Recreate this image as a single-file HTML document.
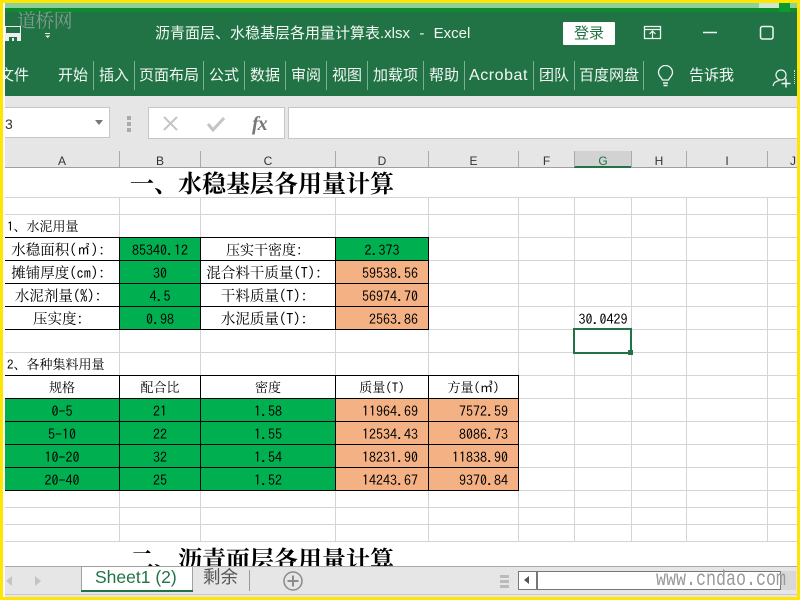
<!DOCTYPE html>
<html><head><meta charset="utf-8">
<style>
html,body{margin:0;padding:0;background:#fff}
#p{position:relative;width:800px;height:600px;overflow:hidden;background:#fff;font-family:"Liberation Sans","Noto Sans CJK SC",sans-serif}
#p div{position:absolute;white-space:nowrap}
.r{color:#f2f7f4;font-size:15px;line-height:20px;top:66px;font-family:"Liberation Sans","Noto Sans CJK SC",sans-serif}
.s{top:61px;width:1px;height:29px;background:#7fae95}
.h{top:156px;line-height:11px;font-size:12px;color:#333;text-align:center;font-family:"Liberation Sans",sans-serif}
.c{font-family:"Noto Serif CJK SC","Liberation Serif",serif;font-size:14px;line-height:22px;color:#000;text-align:center}
.n{font-family:"IPAGothic","Liberation Mono",monospace;font-size:14px;line-height:22px;color:#000;text-align:center}
.m{font-family:"IPAGothic","Liberation Mono",monospace}
.ra{text-align:right}
.t{font-family:"Noto Serif CJK SC","Liberation Serif",serif;font-weight:700;font-size:24px;line-height:30px;color:#000}
</style></head><body>
<div id="p">
<!-- grid -->
<svg style="position:absolute;left:0;top:0" width="800" height="600" shape-rendering="crispEdges">
<g stroke="#d4d4d4" stroke-width="1">
<path d="M119.5 167V566M200.5 167V566M335.5 167V566M428.5 167V566M518.5 167V566M574.5 167V566M631.5 167V566M686.5 167V566M767.5 167V566"/>
<path d="M5 197.5H797M5 214.5H797M5 237.5H797M5 260.5H797M5 283.5H797M5 306.5H797M5 329.5H797M5 352.5H797M5 375.5H797M5 398.5H797M5 421.5H797M5 444.5H797M5 467.5H797M5 490.5H797M5 507.5H797M5 524.5H797M5 541.5H797"/>
</g>
<rect x="120" y="238" width="80" height="91" fill="#00B050"/>
<rect x="336" y="238" width="92" height="22" fill="#00B050"/>
<rect x="336" y="261" width="92" height="68" fill="#F4B183"/>
<rect x="5" y="399" width="330" height="91" fill="#00B050"/>
<rect x="336" y="399" width="182" height="91" fill="#F4B183"/>
<rect x="5" y="168" width="792" height="29" fill="#fff"/>
<rect x="5" y="542" width="792" height="24" fill="#fff"/>
<g stroke="#000" stroke-width="1">
<path d="M5 237.5H428.5M5 260.5H428.5M5 283.5H428.5M5 306.5H428.5M5 329.5H428.5"/>
<path d="M119.5 237V330M200.5 237V330M335.5 237V330M428.5 237V330"/>
<path d="M5 375.5H518.5M5 398.5H518.5M5 421.5H518.5M5 444.5H518.5M5 467.5H518.5M5 490.5H518.5"/>
<path d="M119.5 375V491M200.5 375V491M335.5 375V491M428.5 375V491M518.5 375V491"/>
</g>
</svg>

<!-- title bar -->
<div style="left:3px;top:3px;width:794px;height:5px;background:#8fce9d"></div>
<div style="left:3px;top:8px;width:794px;height:4px;background:#0f8a2c"></div>
<div style="left:759px;top:3px;width:20px;height:5px;background:#cfe6d2"></div>
<div style="left:779px;top:3px;width:11px;height:9px;background:#0f9a2e"></div>
<div style="left:5px;top:12px;width:792px;height:84px;background:#217346"></div>
<div style="left:17px;top:7px;font:19px/26px 'Noto Serif CJK SC',serif;letter-spacing:-.7px;color:#7f9c8c">道桥网</div>
<svg style="position:absolute;left:5px;top:26px" width="60" height="18" shape-rendering="crispEdges">
<path d="M0 0H16V15H0Z" fill="#eee"/><path d="M1 1H15V9H1Z" fill="#217346"/><path d="M1 7H15V9H1Z" fill="#eee"/><path d="M4 11H12V15H4Z" fill="#217346"/><path d="M7 12H9V15H7Z" fill="#eee"/>
<path d="M40 7H45V8H40ZM40 9.500H45L42.500 12Z" fill="#eee"/>
</svg>
<div style="left:155px;top:23px;font-size:15px;line-height:22px;color:#f2f7f4;white-space:pre;word-spacing:.5px">沥青面层、水稳基层各用量计算表.xlsx  -  Excel</div>
<div style="left:563px;top:22px;width:52px;height:23px;background:#fff;border-radius:1px;color:#217346;font-size:15px;line-height:23px;text-align:center">登录</div>
<svg style="position:absolute;left:640px;top:19px" width="140" height="24" fill="none" stroke="#f0f5f2">
<path d="M4.500 7.500H20.500V19.500H4.500ZM4.500 10.500H20.500" stroke-width="1.300"/>
<path d="M12.500 19V12.500M9.500 15L12.500 12L15.500 15" stroke-width="1.200"/>
<path d="M63 13.500H77" stroke-width="1.500"/>
<rect x="120.500" y="7.500" width="12.500" height="12.500" rx="2" stroke-width="1.500"/>
</svg>

<!-- ribbon tabs -->
<div class="r" style="left:-1px">文件</div>
<div class="r" style="left:58px">开始</div><div class="s" style="left:93px"></div>
<div class="r" style="left:99px">插入</div><div class="s" style="left:134px"></div>
<div class="r" style="left:139px">页面布局</div><div class="s" style="left:203px"></div>
<div class="r" style="left:209px">公式</div><div class="s" style="left:244px"></div>
<div class="r" style="left:250px">数据</div><div class="s" style="left:285px"></div>
<div class="r" style="left:291px">审阅</div><div class="s" style="left:326px"></div>
<div class="r" style="left:332px">视图</div><div class="s" style="left:367px"></div>
<div class="r" style="left:373px">加载项</div><div class="s" style="left:423px"></div>
<div class="r" style="left:429px">帮助</div><div class="s" style="left:464px"></div>
<div class="r" style="left:469px;font-size:16px;letter-spacing:.55px">Acrobat</div><div class="s" style="left:533px"></div>
<div class="r" style="left:539px">团队</div><div class="s" style="left:574px"></div>
<div class="r" style="left:579px">百度网盘</div><div class="s" style="left:643px"></div>
<div class="r" style="left:689px;top:66px">告诉我</div>
<svg style="position:absolute;left:655px;top:65px" width="22" height="24" fill="none" stroke="#f0f5f2" stroke-width="1.300">
<path d="M7.500 15C6.500 12.500 3.500 11 3.500 7.500A7 7 0 0 1 17.500 7.500C17.500 11 14.500 12.500 13.500 15Z"/>
<path d="M8 18H13M8.500 20.500H12.500" stroke-width="1.600"/>
</svg>
<svg style="position:absolute;left:770px;top:66px" width="27" height="24" fill="none" stroke="#f0f5f2" stroke-width="1.200">
<circle cx="11" cy="9" r="5"/><path d="M3 20C3.500 17 6 15 9.500 14.500"/>
<path d="M11.500 17.500H20.500M16 12.500V21.500" stroke-width="1.500"/>
</svg>
<div style="left:794px;top:70px;width:3px;height:14px;border-left:1px dotted #cfe0d6"></div>

<!-- formula bar -->
<div style="left:5px;top:96px;width:792px;height:56px;background:#e6e6e6"></div>
<div style="left:5px;top:107px;width:105px;height:31px;background:#fff;border:solid #c6c6c6;border-width:1px 1px 1px 0;box-sizing:border-box"></div>
<div style="left:5px;top:115px;font-size:14px;line-height:18px;color:#333">3</div>
<div style="left:95px;top:120px;width:0;height:0;border:4px solid transparent;border-top:5px solid #777;border-bottom:0"></div>
<div style="left:127px;top:116px;width:4px;height:4px;background:#aaa"></div>
<div style="left:127px;top:122px;width:4px;height:4px;background:#aaa"></div>
<div style="left:127px;top:128px;width:4px;height:4px;background:#aaa"></div>
<div style="left:148px;top:107px;width:137px;height:32px;background:#fff;border:1px solid #c6c6c6;box-sizing:border-box"></div>
<svg style="position:absolute;left:160px;top:113px" width="70" height="22" fill="none">
<path d="M4 4L17 17M17 4L4 17" stroke="#c4c4c4" stroke-width="2"/>
<path d="M48 11L53 17L64 5" stroke="#c4c4c4" stroke-width="3"/>
</svg>
<div style="left:252px;top:111px;font:italic 700 20px/26px 'Liberation Serif',serif;color:#777;letter-spacing:-1px">fx</div>
<div style="left:288px;top:107px;width:509px;height:32px;background:#fff;border:solid #c6c6c6;border-width:1px 0 1px 1px;box-sizing:border-box"></div>

<!-- col headers -->
<div style="left:5px;top:152px;width:792px;height:15px;background:#e6e6e6;border-bottom:1px solid #9f9f9f"></div>
<div style="left:574px;top:151px;width:57px;height:15px;background:#d2d2d2"></div>
<div style="left:574px;top:166px;width:57px;height:2px;background:#217346"></div>
<svg style="position:absolute;left:0;top:151px" width="800" height="17" shape-rendering="crispEdges"><path d="M119.500 0V16M200.500 0V16M335.500 0V16M428.500 0V16M518.500 0V16M574.500 0V16M631.500 0V16M686.500 0V16M767.500 0V16" stroke="#aaa"/></svg>
<div class="h" style="left:5px;width:114px">A</div>
<div class="h" style="left:120px;width:80px">B</div>
<div class="h" style="left:201px;width:134px">C</div>
<div class="h" style="left:336px;width:92px">D</div>
<div class="h" style="left:429px;width:89px">E</div>
<div class="h" style="left:519px;width:55px">F</div>
<div class="h" style="left:575px;width:56px;color:#217346">G</div>
<div class="h" style="left:632px;width:54px">H</div>
<div class="h" style="left:687px;width:80px">I</div>
<div class="h" style="left:790px">J</div>

<!-- sheet content -->
<div class="t" style="left:130px;top:167px">一、水稳基层各用量计算</div>
<div class="c" style="left:7px;top:215px;font-size:13px"><span class="m">1</span>、水泥用量</div>

<div class="c" style="left:5px;width:114px;top:239px;font-size:14.500px">水稳面积<span class="m">(㎡)</span>：</div>
<div class="c" style="left:5px;width:114px;top:262px;font-size:14.500px">摊铺厚度<span class="m">(cm)</span>：</div>
<div class="c" style="left:5px;width:114px;top:285px;font-size:14.500px">水泥剂量<span class="m">(%)</span>：</div>
<div class="c" style="left:5px;width:114px;top:308px;font-size:14.500px">压实度：</div>
<div class="n" style="left:120px;width:80px;top:239px">85340.12</div>
<div class="n" style="left:120px;width:80px;top:262px">30</div>
<div class="n" style="left:120px;width:80px;top:285px">4.5</div>
<div class="n" style="left:120px;width:80px;top:308px">0.98</div>
<div class="c" style="left:201px;width:134px;top:239px">压实干密度：</div>
<div class="c" style="left:201px;width:134px;top:262px;font-size:14.500px">混合料干质量<span class="m">(T)</span>：</div>
<div class="c" style="left:201px;width:134px;top:285px;font-size:14.500px">干料质量<span class="m">(T)</span>：</div>
<div class="c" style="left:201px;width:134px;top:308px;font-size:14.500px">水泥质量<span class="m">(T)</span>：</div>
<div class="n" style="left:336px;width:92px;top:239px">2.373</div>
<div class="n ra" style="left:336px;width:82px;top:262px">59538.56</div>
<div class="n ra" style="left:336px;width:82px;top:285px">56974.70</div>
<div class="n ra" style="left:336px;width:82px;top:308px">2563.86</div>
<div class="n" style="left:575px;width:56px;top:308px">30.0429</div>

<div class="c" style="left:7px;top:353px;font-size:13px"><span class="m">2</span>、各种集料用量</div>
<div class="c" style="left:5px;width:114px;top:376px;font-size:13px">规格</div>
<div class="c" style="left:120px;width:80px;top:376px;font-size:13px">配合比</div>
<div class="c" style="left:201px;width:134px;top:376px;font-size:13px">密度</div>
<div class="c" style="left:336px;width:92px;top:376px;font-size:13px">质量<span class="m">(T)</span></div>
<div class="c" style="left:429px;width:89px;top:376px;font-size:13px">方量<span class="m">(㎥)</span></div>

<div class="n" style="left:5px;width:114px;top:400px">0-5</div>
<div class="n" style="left:5px;width:114px;top:423px">5-10</div>
<div class="n" style="left:5px;width:114px;top:446px">10-20</div>
<div class="n" style="left:5px;width:114px;top:469px">20-40</div>
<div class="n" style="left:120px;width:80px;top:400px">21</div>
<div class="n" style="left:120px;width:80px;top:423px">22</div>
<div class="n" style="left:120px;width:80px;top:446px">32</div>
<div class="n" style="left:120px;width:80px;top:469px">25</div>
<div class="n" style="left:201px;width:134px;top:400px">1.58</div>
<div class="n" style="left:201px;width:134px;top:423px">1.55</div>
<div class="n" style="left:201px;width:134px;top:446px">1.54</div>
<div class="n" style="left:201px;width:134px;top:469px">1.52</div>
<div class="n ra" style="left:336px;width:82px;top:400px">11964.69</div>
<div class="n ra" style="left:336px;width:82px;top:423px">12534.43</div>
<div class="n ra" style="left:336px;width:82px;top:446px">18231.90</div>
<div class="n ra" style="left:336px;width:82px;top:469px">14243.67</div>
<div class="n ra" style="left:429px;width:79px;top:400px">7572.59</div>
<div class="n ra" style="left:429px;width:79px;top:423px">8086.73</div>
<div class="n ra" style="left:429px;width:79px;top:446px">11838.90</div>
<div class="n ra" style="left:429px;width:79px;top:469px">9370.84</div>

<div class="t" style="left:130px;top:543px">二、沥青面层各用量计算</div>

<!-- selection -->
<div style="left:573px;top:328px;width:59px;height:26px;border:2px solid #217346;box-sizing:border-box"></div>
<div style="left:628px;top:350px;width:5px;height:5px;background:#217346"></div>

<!-- sheet tabs -->
<div style="left:5px;top:566px;width:792px;height:31px;background:#e6e6e6;border-top:1px solid #a8a8a8;box-sizing:border-box"></div>
<div style="left:81px;top:566px;width:112px;height:26px;background:#fff;border:solid #a0a0a0;border-width:1px 1px 0 1px;box-sizing:border-box"></div>
<div style="left:81px;top:590px;width:112px;height:2px;background:#217346"></div>
<div style="left:5px;top:594px;width:792px;height:1px;background:#c8c8c8"></div>
<div style="left:95px;top:566px;font-size:17.500px;line-height:23px;color:#217346">Sheet1 (2)</div>
<div style="left:203px;top:566px;font-size:17.500px;line-height:23px;color:#555">剩余</div>
<div style="left:249px;top:570px;width:1px;height:21px;background:#999"></div>
<div style="left:6px;top:576px;width:0;height:0;border:5px solid transparent;border-right:6px solid #c4c4c4;border-left:0"></div>
<div style="left:35px;top:576px;width:0;height:0;border:5px solid transparent;border-left:6px solid #c4c4c4;border-right:0"></div>
<svg style="position:absolute;left:282px;top:569px" width="24" height="24" fill="none" stroke="#8a8a8a"><circle cx="11" cy="12" r="9" stroke-width="1.500"/><path d="M5.500 12H16.500M11 6.500V17.500" stroke-width="2"/></svg>
<div style="left:500px;top:575px;width:9px;height:3px;background:#bbb"></div>
<div style="left:500px;top:580px;width:9px;height:3px;background:#bbb"></div>
<div style="left:500px;top:585px;width:9px;height:3px;background:#bbb"></div>
<div style="left:518px;top:571px;width:263px;height:19px;background:#fff;border:1px solid #777;box-sizing:border-box"></div>
<div style="left:781px;top:571px;width:15px;height:19px;background:#d8d8d8"></div>
<div style="left:536px;top:571px;width:2px;height:19px;background:#777"></div>
<div style="left:524px;top:576px;width:0;height:0;border:4px solid transparent;border-right:5px solid #555;border-left:0"></div>
<div style="left:656px;top:570px;font:16.670px/22px 'Liberation Mono',monospace;color:#999;transform:scaleY(1.300);transform-origin:0 50%">www.cndao.com</div>

<!-- yellow frame -->
<div style="left:0;top:0;width:800px;height:3px;background:#FFE600"></div>
<div style="left:0;top:597px;width:800px;height:3px;background:#FFE600"></div>
<div style="left:0;top:0;width:3px;height:600px;background:#FFE600"></div>
<div style="left:797px;top:0;width:3px;height:600px;background:#FFE600"></div>
<div style="left:3px;top:3px;width:2px;height:594px;background:#fff"></div>
</div>
</body></html>
